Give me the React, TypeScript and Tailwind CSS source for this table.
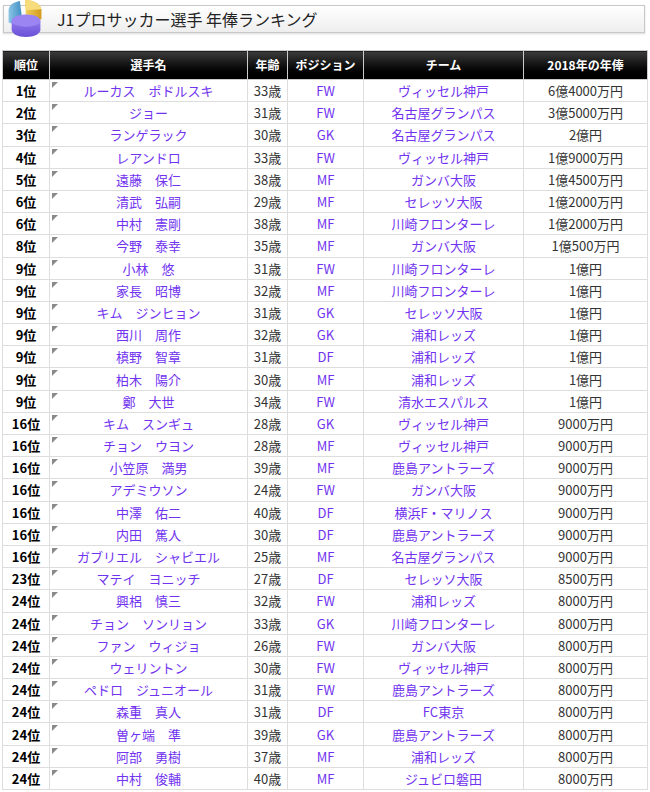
import React from 'react';

type Row = [string, string, string, string, string, string];

const rows: Row[] = [
  ['1位', 'ルーカス　ポドルスキ', '33歳', 'FW', 'ヴィッセル神戸', '6億4000万円'],
  ['2位', 'ジョー', '31歳', 'FW', '名古屋グランパス', '3億5000万円'],
  ['3位', 'ランゲラック', '30歳', 'GK', '名古屋グランパス', '2億円'],
  ['4位', 'レアンドロ', '33歳', 'FW', 'ヴィッセル神戸', '1億9000万円'],
  ['5位', '遠藤　保仁', '38歳', 'MF', 'ガンバ大阪', '1億4500万円'],
  ['6位', '清武　弘嗣', '29歳', 'MF', 'セレッソ大阪', '1億2000万円'],
  ['6位', '中村　憲剛', '38歳', 'MF', '川崎フロンターレ', '1億2000万円'],
  ['8位', '今野　泰幸', '35歳', 'MF', 'ガンバ大阪', '1億500万円'],
  ['9位', '小林　悠', '31歳', 'FW', '川崎フロンターレ', '1億円'],
  ['9位', '家長　昭博', '32歳', 'MF', '川崎フロンターレ', '1億円'],
  ['9位', 'キム　ジンヒョン', '31歳', 'GK', 'セレッソ大阪', '1億円'],
  ['9位', '西川　周作', '32歳', 'GK', '浦和レッズ', '1億円'],
  ['9位', '槙野　智章', '31歳', 'DF', '浦和レッズ', '1億円'],
  ['9位', '柏木　陽介', '30歳', 'MF', '浦和レッズ', '1億円'],
  ['9位', '鄭　大世', '34歳', 'FW', '清水エスパルス', '1億円'],
  ['16位', 'キム　スンギュ', '28歳', 'GK', 'ヴィッセル神戸', '9000万円'],
  ['16位', 'チョン　ウヨン', '28歳', 'MF', 'ヴィッセル神戸', '9000万円'],
  ['16位', '小笠原　満男', '39歳', 'MF', '鹿島アントラーズ', '9000万円'],
  ['16位', 'アデミウソン', '24歳', 'FW', 'ガンバ大阪', '9000万円'],
  ['16位', '中澤　佑二', '40歳', 'DF', '横浜F・マリノス', '9000万円'],
  ['16位', '内田　篤人', '30歳', 'DF', '鹿島アントラーズ', '9000万円'],
  ['16位', 'ガブリエル　シャビエル', '25歳', 'MF', '名古屋グランパス', '9000万円'],
  ['23位', 'マテイ　ヨニッチ', '27歳', 'DF', 'セレッソ大阪', '8500万円'],
  ['24位', '興梠　慎三', '32歳', 'FW', '浦和レッズ', '8000万円'],
  ['24位', 'チョン　ソンリョン', '33歳', 'GK', '川崎フロンターレ', '8000万円'],
  ['24位', 'ファン　ウィジョ', '26歳', 'FW', 'ガンバ大阪', '8000万円'],
  ['24位', 'ウェリントン', '30歳', 'FW', 'ヴィッセル神戸', '8000万円'],
  ['24位', 'ペドロ　ジュニオール', '31歳', 'FW', '鹿島アントラーズ', '8000万円'],
  ['24位', '森重　真人', '31歳', 'DF', 'FC東京', '8000万円'],
  ['24位', '曽ヶ端　準', '39歳', 'GK', '鹿島アントラーズ', '8000万円'],
  ['24位', '阿部　勇樹', '37歳', 'MF', '浦和レッズ', '8000万円'],
  ['24位', '中村　俊輔', '40歳', 'MF', 'ジュビロ磐田', '8000万円'],
];

const headers = ['順位', '選手名', '年齢', 'ポジション', 'チーム', '2018年の年俸'];
const widths = ['w-[47px]', 'w-[198px]', 'w-[40px]', 'w-[76px]', 'w-[160px]', 'w-[124px]'];

// 3D pie chart icon
const PieIcon = () => (
  <svg width="46" height="38" viewBox="4 0 38 37">
    <defs>
      <linearGradient id="blue" x1="0" y1="0" x2="1" y2="0">
        <stop offset="0" stopColor="#8cc4e6" />
        <stop offset="1" stopColor="#3f8fc4" />
      </linearGradient>
      <linearGradient id="yellow" x1="0" y1="0" x2="1" y2="0">
        <stop offset="0" stopColor="#f2d05a" />
        <stop offset="1" stopColor="#d19a1c" />
      </linearGradient>
      <linearGradient id="purple" x1="0" y1="0" x2="0" y2="1">
        <stop offset="0" stopColor="#a18af5" />
        <stop offset="1" stopColor="#6a4fd6" />
      </linearGradient>
    </defs>
    {/* blue slice */}
    <path d="M7 10 C7 5 12 2 18 1 L20 17 L20 26 L7 22 Z" fill="url(#blue)" />
    {/* yellow slice */}
    <path d="M23 0 C30 0 37 3 39 9 L39 19 L24 17 Z" fill="url(#yellow)" />
    <path d="M23 0 C30 0 37 3 39 9 L24 10 Z" fill="#f6dc7a" />
    {/* purple slice */}
    <path d="M10 21 C10 16 17 14 25 14 C33 14 38 17 38 21 L38 29 C38 33 32 36 24 36 C16 36 10 33 10 29 Z" fill="url(#purple)" />
    <ellipse cx="24" cy="20.5" rx="14" ry="5.5" fill="#9b85f2" />
  </svg>
);

export default function App() {
  return (
    <div className="bg-white w-[650px] h-[792px] overflow-hidden font-['Noto_Sans_CJK_JP','Liberation_Sans',sans-serif] text-[#333]">
      <div className="relative pt-[5px] pl-[3px] pr-[5px]">
        <div className="h-[28px] border border-[#c8c8c8] bg-gradient-to-b from-white to-[#eeeeee] shadow-[0_1px_2px_rgba(0,0,0,0.15)] flex items-center pl-[53px] text-[16px] text-[#222]">
          J1プロサッカー選手 年俸ランキング
        </div>
        <div className="absolute left-[2px] top-0">
          <PieIcon />
        </div>
      </div>

      <table className="mt-[17px] ml-[2px] w-[645px] table-fixed border-collapse text-[13px]">
        <thead>
          <tr className="h-[29px]">
            {headers.map((h, i) => (
              <th
                key={h}
                className={`${widths[i]} border border-[#cccccc] bg-gradient-to-b from-[#3c3c3c] to-black text-white font-semibold text-[12px] text-center align-middle`}
              >
                {h}
              </th>
            ))}
          </tr>
        </thead>
        <tbody>
          {rows.map((r, idx) => (
            <tr key={idx} className="h-[22.2px]">
              <td className="border border-[#dddddd] text-center font-bold text-black leading-none">{r[0]}</td>
              <td className="relative border border-[#dddddd] text-center text-[#7133f0] leading-none">
                <span className="absolute left-[2px] top-[2px] w-0 h-0 border-t-[6px] border-t-[#8a8a8a] border-r-[6px] border-r-transparent" />
                {r[1]}
              </td>
              <td className="border border-[#dddddd] text-center leading-none">{r[2]}</td>
              <td className="border border-[#dddddd] text-center text-[#7133f0] leading-none">{r[3]}</td>
              <td className="border border-[#dddddd] text-center text-[#7133f0] leading-none">{r[4]}</td>
              <td className="border border-[#dddddd] text-center leading-none">{r[5]}</td>
            </tr>
          ))}
        </tbody>
      </table>
    </div>
  );
}
